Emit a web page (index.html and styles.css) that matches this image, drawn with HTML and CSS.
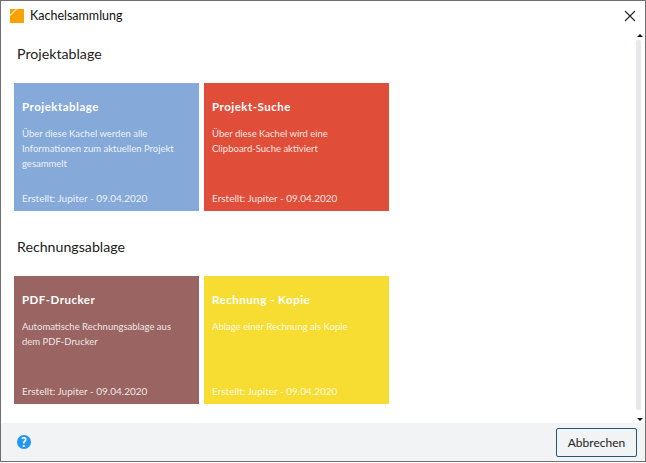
FILE: index.html
```html
<!DOCTYPE html>
<html lang="de">
<head>
<meta charset="utf-8">
<title>Kachelsammlung</title>
<link rel="stylesheet" href="styles.css">
</head>
<body>
<div class="window">
  <header class="titlebar">
    <svg class="logo" width="14" height="14" viewBox="0 0 14 14"><rect width="14" height="14" fill="#f9a100"/><path d="M0 6.5L6.5 0" stroke="#fbe3b0" stroke-width="1.2" fill="none"/></svg>
    <span class="title">Kachelsammlung</span>
    <svg class="close" width="12" height="12" viewBox="0 0 12 12"><path d="M1 1L11 11M11 1L1 11" stroke="#222" stroke-width="1.1" fill="none"/></svg>
  </header>
  <div class="content">
    <main class="main">
      <section class="group">
        <h2 class="group-title">Projektablage</h2>
        <div class="tiles">
          <article class="tile tile-blue">
            <h3 class="tile-title">Projektablage</h3>
            <p class="tile-text">Über diese Kachel werden alle Informationen zum aktuellen Projekt gesammelt</p>
            <p class="tile-meta">Erstellt: Jupiter - 09.04.2020</p>
          </article>
          <article class="tile tile-red">
            <h3 class="tile-title">Projekt-Suche</h3>
            <p class="tile-text">Über diese Kachel wird eine Clipboard-Suche aktiviert</p>
            <p class="tile-meta">Erstellt: Jupiter - 09.04.2020</p>
          </article>
        </div>
      </section>
      <section class="group">
        <h2 class="group-title">Rechnungsablage</h2>
        <div class="tiles">
          <article class="tile tile-brown">
            <h3 class="tile-title">PDF-Drucker</h3>
            <p class="tile-text">Automatische Rechnungsablage aus dem PDF-Drucker</p>
            <p class="tile-meta">Erstellt: Jupiter - 09.04.2020</p>
          </article>
          <article class="tile tile-yellow">
            <h3 class="tile-title">Rechnung - Kopie</h3>
            <p class="tile-text">Ablage einer Rechnung als Kopie</p>
            <p class="tile-meta">Erstellt: Jupiter - 09.04.2020</p>
          </article>
        </div>
      </section>
    </main>
    <div class="scrollbar">
      <span class="arrow-up"></span>
      <span class="thumb"></span>
      <span class="arrow-down"></span>
    </div>
  </div>
  <footer class="footer">
    <svg class="help" width="14" height="14" viewBox="0 0 14 14"><circle cx="7" cy="7" r="7" fill="#2196f3"/><text x="7" y="11.5" text-anchor="middle" class="help-mark">?</text></svg>
    <button class="cancel">Abbrechen</button>
  </footer>
</div>
</body>
</html>
```
FILE: styles.css
```css
* { box-sizing: border-box; }
html, body { margin: 0; padding: 0; }
body { width: 646px; height: 463px; background: #fff; font-family: Lato, "Noto Sans", sans-serif; overflow: hidden; }
.window { width: 646px; height: 462px; display: flex; flex-direction: column; background: #fff; border: 1px solid #6f6f6f; }
.titlebar { height: 31px; flex: none; display: flex; align-items: center; padding: 0 9px 2px 9px; }
.logo { flex: none; margin-right: 6px; }
.title { font-size: 12.5px; color: #111; flex: 1; }
.close { flex: none; }
.content { flex: 1; min-height: 0; display: flex; }
.main { flex: 1; padding: 0 0 0 13px; }
.group { margin-bottom: 25px; }
.group-title { margin: 0 0 19px 3px; font-size: 14.2px; line-height: 21px; font-weight: 400; color: #222; padding-top: 11px; }
.group + .group .group-title { padding-top: 0; }
.tiles { display: flex; gap: 5px; }
.tile { width: 185px; height: 128px; padding: 16px 8px 6px; display: flex; flex-direction: column; color: #fff; }
.tile-blue { background: #85a9d8; }
.tile-red { background: #e04e39; }
.tile-brown { background: #996461; }
.tile-yellow { background: #f7dd31; }
.tile-title { margin: 0 0 11px; font-size: 11.5px; line-height: 16px; font-weight: 700; letter-spacing: .5px; }
.tile-text { margin: 0; padding-right: 12px; font-size: 9.5px; line-height: 15px; flex: 1; color: rgba(255,255,255,.88); }
.tile-meta { margin: 0; font-size: 10px; line-height: 14px; color: rgba(255,255,255,.88); }
.scrollbar { width: 12px; flex: none; display: flex; flex-direction: column; align-items: center; }
.arrow-up { width: 0; height: 0; margin: 2px 0 0 2px; border: 3px solid transparent; border-top: 0; border-bottom: 3px solid #111; }
.thumb { flex: 1; width: 5px; margin: 3px 1px 8px 0; background: #e6e8ea; border-radius: 2px; }
.arrow-down { width: 0; height: 0; margin: 0 0 2px 2px; border: 3px solid transparent; border-bottom: 0; border-top: 3px solid #111; }
.footer { height: 38px; flex: none; background: #f2f3f5; display: flex; align-items: center; justify-content: space-between; padding: 0 8px 0 16px; }
.help-mark { font-size: 12.5px; font-weight: 900; fill: #fff; font-family: Lato, sans-serif; }
.cancel { width: 81px; height: 29px; background: #f2f3f5; border: 1px solid #1d5a80; border-radius: 2px; font: 12px Lato, sans-serif; color: #222; padding: 0; }
```
